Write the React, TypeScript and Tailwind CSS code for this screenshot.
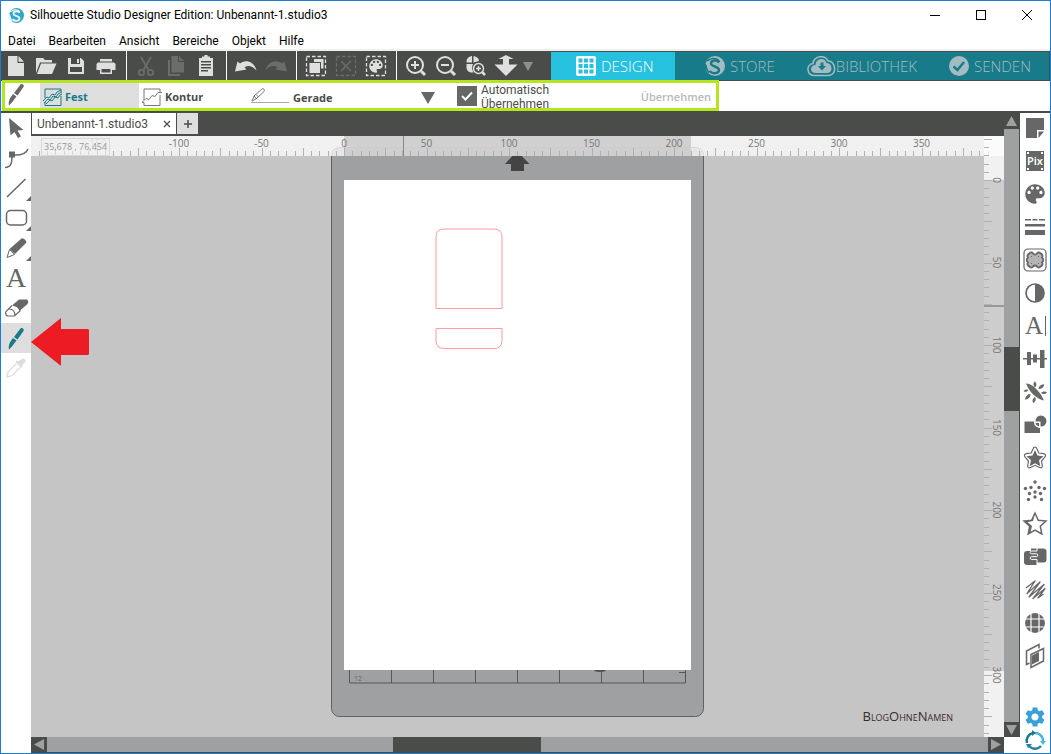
import type { ReactNode } from 'react';
import { IoMdColorPalette } from 'react-icons/io';
import { MdSettings } from 'react-icons/md';

const PX_PER_MM = 1.65;

const Icon = ({ children }: { children: ReactNode }) => (
  <svg width="30" height="30" viewBox="0 0 30 30" className="block shrink-0" fill="currentColor" aria-hidden="true">
    {children}
  </svg>
);

const SwooshLogo = ({ size, disc, line }: { size: number; disc: string; line: string }) => (
  <svg width={size} height={size} viewBox="0 0 20 20" className="shrink-0" aria-hidden="true">
    <circle cx="10" cy="10" r="10" fill={disc} />
    <path d="M0 4.500C3 6 4 2.500 8 2.500c4 0 6 1.500 6.500 3.500" fill="none" stroke={line} strokeWidth="1.500" />
    <path d="M14 6.500C12 3.500 6 4 6 7.500c0 3.500 8 2.500 8 6.500 0 3.500-6 4.500-9.500 1" fill="none" stroke={line} strokeWidth="2.400" />
    <path d="M0 7v6l4 4.500c1-2-1-3-1.500-5S1.500 8 0 7z" fill={line} />
  </svg>
);

const KnifeShape = () => (
  <>
    <path d="M19.500 5.500c1.500-1.300 4.200.6 3 2.500l-6 8.500-3.500-2.500z" />
    <path d="M12 15l3.500 2.500-2 2.500c-1.500 2.500-3.500 4.500-5.500 6.500-.8-2 0-5.500 1.500-8z" />
  </>
);

const dashedBox = <rect x="5.500" y="5.500" width="19" height="19" fill="none" stroke="currentColor" strokeWidth="1.300" strokeDasharray="3.500 2" />;

const fileTools = [
  { label: 'Neu', disabled: false, icon: <><path d="M7 5h9.500v7H23v13H7z" /><path d="M17.500 5L23 10.800h-5.500z" /></> },
  {
    label: 'Öffnen',
    disabled: false,
    icon: <><path d="M5 22V7h7l2 2h7v2.500H9z" /><path d="M10 12.500h15.500L21 23H6z" /></>,
  },
  {
    label: 'Speichern',
    disabled: false,
    icon: <path fillRule="evenodd" d="M7 7h13l3 3v13H7zM10 7v6h9V7zM9 16v5h12v-5zM16 8h2v4h-2z" />,
  },
  {
    label: 'Drucken',
    disabled: false,
    icon: <><path d="M9 8h12v2.500H9z" /><path fillRule="evenodd" d="M7 11.500h16l1.500 1.500v6h-3.500v4H9v-4H5.500v-6zM10.500 18v3.500h9V18z" /></>,
  },
];

const clipboardTools = [
  {
    label: 'Ausschneiden',
    disabled: true,
    icon: (
      <g fill="none" stroke="currentColor" strokeWidth="1.800">
        <path d="M10 6l7.500 13M20 6l-7.500 13" />
        <circle cx="10.500" cy="21.500" r="2.700" />
        <circle cx="19.500" cy="21.500" r="2.700" />
      </g>
    ),
  },
  {
    label: 'Kopieren',
    disabled: true,
    icon: <><path d="M7 9h2v14h10v2H7z" /><path d="M10.500 5h6.500v6h6v10.500H10.500z" /><path d="M18 5l5 5h-5z" /></>,
  },
  {
    label: 'Einfügen',
    disabled: false,
    icon: <path fillRule="evenodd" d="M8 7h3V5.500h2.500V4h3v1.500H19V7h3v18H8zM10 10v1.500h10V10zM10 13v1.500h10V13zM10 16v1.500h10V16zM10 19v1.500h7V19z" />,
  },
];

const historyTools = [
  { label: 'Rückgängig', disabled: false, icon: <path d="M4 20.500l2.500-10 2.500 2c6-4.500 14-2 16.500 7-4-4.500-8-5.500-12-3.200l2 2.200z" /> },
  { label: 'Wiederholen', disabled: true, icon: <path d="M26 20.500l-2.500-10-2.500 2c-6-4.500-14-2-16.500 7 4-4.500 8-5.500 12-3.200l-2 2.200z" /> },
];

const selectionTools = [
  { label: 'Alles auswählen', disabled: false, icon: <>{dashedBox}<path d="M13 8h9.500v9.500H20V11h-7z" /><path d="M8.500 12h10.500v10H8.500z" /></> },
  { label: 'Auswahl aufheben', disabled: true, icon: <>{dashedBox}<path d="M10 10l10 10M20 10L10 20" stroke="currentColor" strokeWidth="1.500" /></> },
  { label: 'Nach Farbe auswählen', disabled: false, icon: <>{dashedBox}<IoMdColorPalette x="6" y="6" size={18} /></> },
];

const zoomTools = [
  {
    label: 'Vergrößern',
    disabled: false,
    icon: (
      <g fill="none" stroke="currentColor" strokeWidth="2">
        <circle cx="14" cy="14" r="8" />
        <path d="M10 14h8M14 10v8" />
        <path d="M20 20l4 4" strokeWidth="3" />
      </g>
    ),
  },
  {
    label: 'Verkleinern',
    disabled: false,
    icon: (
      <g fill="none" stroke="currentColor" strokeWidth="2">
        <circle cx="14" cy="14" r="8" />
        <path d="M10 14h8" />
        <path d="M20 20l4 4" strokeWidth="3" />
      </g>
    ),
  },
  {
    label: 'Auswahl zoomen',
    disabled: false,
    icon: (
      <>
        <path d="M5.500 11.500c0-4 2-6 5.500-6.500v6.500zM12.500 5c3.500.5 5.500 2.500 5.500 5l-5.500 1.500zM5.500 13h6.500c-1.500 3-1 6 .5 8.500-4 .5-7-1.500-7-5z" />
        <g fill="none" stroke="currentColor" strokeWidth="1.500">
          <circle cx="17.500" cy="17.500" r="5" />
          <path d="M15 17.500h5M17.500 15v5" />
          <path d="M21 21l3 3" strokeWidth="2.500" />
        </g>
      </>
    ),
  },
  { label: 'Verschieben', disabled: false, icon: <path d="M15 4l7.500 4H18v5.500h8.500L15 25 3.500 13.500H12V8H7.500z" /> },
];

const drawTools = [
  { label: 'Auswählen', icon: <path d="M8 5l14.500 12-6 .5 3.500 6-3 1.500-3.500-6-4 3.500z" /> },
  {
    label: 'Punktbearbeitung',
    icon: <><path d="M4 24.500c6 0 7-4 7-12.500 7 .5 14-.5 16-6" fill="none" stroke="currentColor" strokeWidth="1.500" /><path d="M8 8.500h6v6H8z" /></>,
  },
  { label: 'Linie', flyout: true, icon: <path d="M6 24L24.500 6" stroke="currentColor" strokeWidth="1.500" /> },
  { label: 'Rechteck', flyout: true, icon: <rect x="5.500" y="7.500" width="20" height="14.500" rx="4" fill="none" stroke="currentColor" strokeWidth="1.500" /> },
  {
    label: 'Freihand',
    flyout: true,
    icon: <><path d="M20.500 5.500c1.500-1 6 3 4.500 4.500L14 21l-5.500-5z" /><path d="M8.500 16.500l5 5-7.500 3z" fill="none" stroke="currentColor" /></>,
  },
  { label: 'Text', icon: <text x="15" y="24" textAnchor="middle" fontSize="28" fontFamily="Liberation Serif, serif">A</text> },
  {
    label: 'Radierer',
    icon: (
      <>
        <path d="M11 12.500l7-6h8c1.500 1 1.500 3 .5 4.500l-8 7c-1-3-3.500-5-7.500-5.500z" />
        <path d="M11 12.500l-6 6c-1 2 0 4.500 2 4.500h6.500l6-5.500M8 16c4 0 6 2.500 6 7" fill="none" stroke="currentColor" strokeWidth="1.200" />
      </>
    ),
  },
  { label: 'Messer', active: true, icon: <KnifeShape /> },
  {
    label: 'Pipette',
    disabled: true,
    icon: (
      <>
        <path d="M20 6.500c2-2.500 6 .5 4 3l-3 3 .8 1-1.500 1.500-6-6L16 7.500l1.500 1z" />
        <path d="M15 11l-8 8-1 5 5-1.500 8-8" fill="none" stroke="currentColor" strokeWidth="1.300" />
      </>
    ),
  },
];

const star = 'M15 4l3.300 7.200 7.700.9-5.700 5.200 1.500 7.700-6.800-3.800-6.800 3.800 1.500-7.700L4 12.100l7.700-.9z';

const panels = [
  { label: 'Seite einrichten', icon: <><path d="M6 5h18v12h-7v8H6z" /><path d="M18.500 18.500H24L18.500 25z" /></> },
  {
    label: 'Pixscan',
    icon: (
      <>
        <path d="M6 5h18v20H6z" />
        <path d="M7 6h2v2H7zM21 6h2v2h-2zM7 22h2v2H7zM21 22h2v2h-2z" fill="#fff" />
        <text x="15" y="19" textAnchor="middle" fontSize="11" fontWeight="600" fill="#fff" fontFamily="Noto Sans, sans-serif">Pix</text>
      </>
    ),
  },
  { label: 'Füllung', icon: <IoMdColorPalette x="2" y="2" size={26} /> },
  { label: 'Linienstil', icon: <path d="M5 7h6v1.500H5zM12.500 7h5v1.500h-5zM19 7h6v1.500h-6zM5 12h20v2.500H5zM5 18h20v5H5z" /> },
  {
    label: 'Nachzeichnen',
    icon: (
      <>
        <rect x="4" y="4" width="22" height="22" rx="4" fill="none" stroke="currentColor" strokeWidth="1.200" />
        <path
          d="M9.500 8.500a2 2 0 0 1 3.500 0a2.500 2.500 0 0 0 4 0a2 2 0 0 1 3.500 0a2.500 2.500 0 0 1 1.500 4a3 3 0 0 1 0 5a2.500 2.500 0 0 1-1.500 4a2 2 0 0 1-3.500 0a2.500 2.500 0 0 0-4 0a2 2 0 0 1-3.500 0a2.500 2.500 0 0 1-1.500-4a3 3 0 0 1 0-5a2.500 2.500 0 0 1 1.500-4z"
          fill="#b4b4b4"
          stroke="currentColor"
          strokeWidth="1.800"
        />
        <path d="M11 11h1v1h-1zM18 11h1v1h-1zM11 18h1v1h-1zM18 18h1v1h-1z" />
      </>
    ),
  },
  { label: 'Bildeffekte', icon: <><circle cx="15" cy="15" r="9" fill="none" stroke="currentColor" strokeWidth="1.700" /><path d="M15 6a9 9 0 0 1 0 18z" /></> },
  {
    label: 'Textstil',
    icon: <><text x="14" y="23" textAnchor="middle" fontSize="25" fontFamily="Liberation Serif, serif">A</text><path d="M25 5h1v20h-1z" /></>,
  },
  { label: 'Ausrichten', icon: <path d="M3 14h24v1.500H3zM7 8h4v13H7zM13 10.500h4v8h-4zM20 6h4.500v18H20z" /> },
  {
    label: 'Replizieren',
    icon: <path d="M6 6.500c6 0 14 7.500 18 17C17 22 9 15 6 6.500zM15 10.500c-2-2-2-4-.5-6 2.500 1.500 2.500 4 .5 6zM18.500 12c0-3 3-5 6-4.500-1 3-3 4.500-6 4.500zM21 16c2-2 4-2 6-.5-2 2-4 2-6 .5zM10.500 17c-3 0-5 2-5.500 5.500 3.500 0 5.500-2.500 5.500-5.500zM15 20c-2.500 1.500-3 4-2 6 2.500-1 3.500-3.500 2-6zM8.500 13c-2-1-3.500-.5-5 1 1.500 1.500 3.500 1 5-1z" />,
  },
  {
    label: 'Modifizieren',
    icon: <><path d="M4.500 11.500h9.500c0 4 2 6 6 6.500V23H4.500z" /><path d="M15.500 11.500a5.500 5.500 0 1 1 5 5v-5z" /><path d="M15.500 13h3.500v3.200c-2-.3-3.200-1.200-3.500-3.200z" /></>,
  },
  {
    label: 'Offset',
    icon: (
      <>
        <path d="M15 7l2.500 5.600 6 .7-4.500 4 1.300 6-5.300-3-5.300 3 1.300-6-4.500-4 6-.7z" />
        <path d="M15 4c1.200 0 1.600 1 2 2l1.800 4 4.800.7c2 .5 2.700 2 1.200 3.500L21.500 18l.8 4.500c.2 2-1 3-2.800 2L15 22.300l-4.500 2.200c-1.800 1-3 0-2.800-2l.8-4.500-3.300-3.800c-1.500-1.500-.8-3 1.200-3.500l4.800-.7L13 6c.4-1 .8-2 2-2z" fill="none" stroke="currentColor" strokeWidth="1.200" />
      </>
    ),
  },
  {
    label: 'Strass',
    icon: (
      <>
        {[[15, 6], [5.500, 12.500], [11, 11.500], [19, 11.500], [24.500, 12.500], [9.500, 17.500], [15, 16], [20.500, 17.500], [8.500, 23.500], [15, 21], [21.500, 23.500]].map(([cx, cy]) => (
          <circle key={`${cx}-${cy}`} cx={cx} cy={cy} r="1.700" />
        ))}
      </>
    ),
  },
  { label: 'Skizze', icon: <><path d={star} fill="none" stroke="currentColor" strokeWidth="1.500" /><path d="M15 4l-3.500 7L4 12.300l5.500 5L8 25l2.500-1.500L12 17l-4.500-4 5.500-1z" /></> },
  {
    label: 'Puzzle',
    icon: (
      <>
        <path d="M11 6.500h12c2.500 0 3.500 1 3.500 3v8c0 2-1 3-3 3H11z" />
        <path d="M4 12c0-2 1-3 3-3h10v14H7c-2 0-3-1-3-3z" />
        <path d="M17 6v3h-5.500c-1.800 0-1.800 2.800 0 2.800h5c1.800 0 1.800 2.800 0 2.800h-5c-1.800 0-1.800 2.800 0 2.800h5.500V23" fill="none" stroke="#fff" />
      </>
    ),
  },
  {
    label: 'Schraffur',
    icon: <path d="M6 13L15 6 7 18.500 20 7 9 22 24 9.500 13 23.500 25 13.500 18 23l5.500-4" fill="none" stroke="currentColor" strokeWidth="1.300" strokeLinejoin="round" />,
  },
  {
    label: 'Kugel',
    icon: (
      <>
        <circle cx="15" cy="15" r="10" />
        <path d="M11 4v22M19 4v22M4 11h22M4 19h22" stroke="#fff" strokeWidth="1.200" />
      </>
    ),
  },
  {
    label: '3D',
    icon: (
      <>
        <path d="M9.500 22L6.500 23.500V10L19 3.500v4" fill="none" stroke="currentColor" strokeWidth="1.500" />
        <path d="M11 13.500L23.500 7.500v12.500L11 26.500z" fill="none" stroke="currentColor" strokeWidth="1.500" />
        <path d="M12 14.500l7-3.500v9l-7 3.500z" />
      </>
    ),
  },
];

const menus = ['Datei', 'Bearbeiten', 'Ansicht', 'Bereiche', 'Objekt', 'Hilfe'];

type Tool = { label: string; disabled: boolean; icon: ReactNode };

const ToolGroup = ({ tools }: { tools: Tool[] }) => (
  <div className="flex shrink-0">
    {tools.map((tool) => (
      <button key={tool.label} aria-label={tool.label} disabled={tool.disabled} className="text-[#dfdfdf] disabled:text-[#6b6d6b]">
        <Icon>{tool.icon}</Icon>
      </button>
    ))}
  </div>
);

const Separator = () => <div className="ml-[5px] mr-1 w-px shrink-0 bg-white" />;

const TitleBar = () => (
  <header className="flex h-7 shrink-0 items-center pl-2 font-['Roboto',sans-serif]">
    <SwooshLogo size={15} disc="#35a5c5" line="#e8f6fa" />
    <h1 className="ml-[6px] flex-1 text-[12px]">Silhouette Studio Designer Edition: Unbenannt-1.studio3</h1>
    <div className="flex">
      <button aria-label="Minimieren" className="w-[46px]">
        <svg width="10" height="10" className="mx-auto"><path d="M0 5.500h10" stroke="#000" /></svg>
      </button>
      <button aria-label="Maximieren" className="w-[46px]">
        <svg width="10" height="10" className="mx-auto"><rect x=".5" y=".5" width="9" height="9" fill="none" stroke="#000" /></svg>
      </button>
      <button aria-label="Schließen" className="w-[46px]">
        <svg width="10" height="10" className="mx-auto"><path d="M0 0l10 10M10 0L0 10" stroke="#000" /></svg>
      </button>
    </div>
  </header>
);

const MainToolbar = () => (
  <div className="flex h-[30px] shrink-0 bg-[#4a4c4a]">
    <ToolGroup tools={fileTools} />
    <Separator />
    <ToolGroup tools={clipboardTools} />
    <Separator />
    <ToolGroup tools={historyTools} />
    <Separator />
    <ToolGroup tools={selectionTools} />
    <Separator />
    <ToolGroup tools={zoomTools} />
    <button aria-label="Weitere Optionen" className="w-[14px] shrink-0 text-[#8e908e]">
      <svg width="10" height="9" className="mx-auto" fill="currentColor"><path d="M0 0h10L5 9z" /></svg>
    </button>
    <nav className="ml-auto flex w-[499px] py-px pr-px text-[15px] font-light text-[#a3bcc1]">
      <a href="#design" className="flex w-[124px] items-center gap-1 bg-[#26c1df] pl-6 text-white">
        <svg width="22" height="22" viewBox="0 0 22 22" aria-hidden="true">
          <rect x="1" y="1" width="20" height="20" rx="2" fill="#fff" />
          <path d="M3.500 3.500h4v4h-4zM9 3.500h4v4H9zM14.500 3.500h4v4h-4zM3.500 9h4v4h-4zM9 9h4v4H9zM14.500 9h4v4h-4zM3.500 14.500h4v4h-4zM9 14.500h4v4H9zM14.500 14.500h4v4h-4z" fill="#26c1df" />
        </svg>
        DESIGN
      </a>
      <div className="flex flex-1 items-center justify-between bg-[#177b8a] pl-[30px] pr-[18px]">
        <a href="#store" className="flex items-center gap-[5px]">
          <SwooshLogo size={20} disc="#a3bcc1" line="#177b8a" />
          STORE
        </a>
        <a href="#bibliothek" className="flex items-center">
          <svg width="29" height="22" viewBox="0 0 29 22" aria-hidden="true">
            <path d="M8 20.500c-9 0-9-11-2-12C7 1 18-1 21 6c7-1 10 13.500 1 14.500z" fill="none" stroke="#a3bcc1" strokeWidth="1.500" />
            <path d="M9 18c-7 0-6-8-.5-8C9 3 18 2 19.500 8c6-.5 7 10 1 10z" fill="#a3bcc1" />
            <path d="M13.500 7.500h3V11H19l-4 4.500L11 11h2.500z" fill="#177b8a" />
          </svg>
          BIBLIOTHEK
        </a>
        <a href="#senden" className="flex items-center gap-[5px]">
          <svg width="20" height="20" viewBox="0 0 20 20" aria-hidden="true">
            <circle cx="10" cy="10" r="10" fill="#a3bcc1" />
            <path d="M4.500 10.500l4 3.500L15 6" fill="none" stroke="#177b8a" strokeWidth="2.500" />
          </svg>
          SENDEN
        </a>
      </div>
    </nav>
  </div>
);

const KnifeOptions = () => (
  <div className="flex h-[30px] shrink-0">
    <form className="-mt-px ml-px flex h-[31px] w-[717px] items-stretch border-[3px] border-[#b5e61d] bg-white text-[11px] font-bold text-[#4a4c4a]">
      <div className="flex w-[35px] items-center overflow-hidden text-[#666866]">
        <svg width="24" height="25" viewBox="4 4 24 25" fill="currentColor" aria-hidden="true"><KnifeShape /></svg>
      </div>
      <button type="button" className="flex w-[99px] items-center gap-[2px] bg-[#dedede] pl-[3px] pt-[3px] text-[#177b8a]">
        <svg width="20" height="20" viewBox="0 0 20 20" fill="none" stroke="currentColor" aria-hidden="true">
          <path d="M2 11V2h16v3M18 9v9.500H2V15" />
          <path d="M0 14l4-4 2 1 3-4 3 1 2-3 4-2M1 16l4-4 2 1 3-4 3 1 2-3 4-2M3 17l4-4 2 1 3-4 3 1 2-3 2-1" />
        </svg>
        Fest
      </button>
      <button type="button" className="flex w-[110px] items-center gap-[3px] pl-[3px] pt-[3px]">
        <svg width="20" height="20" viewBox="0 0 20 20" fill="none" stroke="#777" aria-hidden="true">
          <path d="M2 13V2h16v3M18 8v10.500H2V15.500H0l4-4 3 1 3-4 3 1 3-4h4" />
        </svg>
        Kontur
      </button>
      <label htmlFor="line-type" aria-label="Linientyp" className="flex items-center pl-px">
        <svg width="40" height="18" viewBox="0 0 40 18" fill="none" stroke="#777" aria-hidden="true">
          <path d="M1 15.500h38" stroke="#aaa" />
          <path d="M2 14l2-5 8-7c2-1 3 1 2 2.500L6 12zM4 9l2.500 3M6 7.500l2.500 2.500" />
        </svg>
      </label>
      <div className="relative w-[145px]">
        <select id="line-type" aria-label="Linientyp" className="h-full w-full appearance-none pl-[3px] pt-[6px]">
          <option>Gerade</option>
        </select>
        <svg width="14" height="12" className="pointer-events-none absolute right-0 top-[9px]" fill="#666866"><path d="M0 0h14L7 12z" /></svg>
      </div>
      <label className="ml-[22px] flex items-center gap-1 font-['Roboto',sans-serif] text-[12px] font-normal leading-[14px]">
        <span className="grid">
          <input type="checkbox" defaultChecked className="col-start-1 row-start-1 size-5 appearance-none bg-[#666866]" />
          <svg width="20" height="20" className="pointer-events-none col-start-1 row-start-1" fill="none"><path d="M5 10l3.500 3.500L15 6.500" stroke="#fff" strokeWidth="2" /></svg>
        </span>
        <span className="pt-[3px]">Automatisch<br />Übernehmen</span>
      </label>
      <button type="button" disabled className="ml-auto pr-[5px] pt-[3px] font-semibold text-[#b9b9b9]">Übernehmen</button>
    </form>
  </div>
);

const DrawToolbox = () => (
  <aside className="w-[30px] shrink-0 bg-white">
    {drawTools.map((tool) => (
      <button
        key={tool.label}
        aria-label={tool.label}
        disabled={tool.disabled}
        className={`block size-[30px] disabled:text-[#dcdcdc] ${tool.active ? 'bg-[#dedede] text-[#177b8a]' : 'text-[#666866]'}`}
      >
        <Icon>
          {tool.icon}
          {tool.flyout && <path d="M30 23v5h-5z" />}
        </Icon>
      </button>
    ))}
  </aside>
);

const PanelBar = () => (
  <aside className="flex w-[30px] shrink-0 flex-col justify-between bg-white text-[#666866]">
    <div className="flex flex-col gap-[3px]">
      {panels.map((panel) => (
        <button key={panel.label} aria-label={panel.label} className="size-[30px]">
          <Icon>{panel.icon}</Icon>
        </button>
      ))}
    </div>
    <div className="flex flex-col items-center">
      <button aria-label="Einstellungen"><MdSettings size={24} color="#3a9fd6" /></button>
      <button aria-label="Synchronisieren">
        <svg width="24" height="24" viewBox="0 0 24 24" fill="none" strokeWidth="2.500" aria-hidden="true">
          <path d="M4 14a8 8 0 0 1 6-10" stroke="#177b8a" />
          <path d="M12 4a8 8 0 0 1 8 9" stroke="#49b9d6" />
          <path d="M18 17a8 8 0 0 1-12 0" stroke="#2a7fa5" />
          <path d="M9 1l4 3-4 3z" fill="#177b8a" />
          <path d="M17 12h6l-3 4z" fill="#49b9d6" />
          <path d="M3 15l6 0-4 4z" fill="#2a7fa5" />
        </svg>
      </button>
    </div>
  </aside>
);

const ticks = (from: number, to: number) => Array.from({ length: (to - from) / 5 + 1 }, (_, i) => from + i * 5);

const TopRuler = () => (
  <svg className="absolute left-0 top-0 h-5 w-full" fontSize="10" fill="#777">
    <rect width="100%" height="20" fill="#fff" opacity=".74" />
    <rect x="313" width="347" height="20" fill="#cacaca" opacity=".85" />
    <g transform="translate(313 0)">
      {ticks(-185, 390).map((mm) => (
        <path key={mm} d={`M${Math.round(mm * PX_PER_MM) + 0.5} ${mm % 25 === 0 ? 12 : 15}V20`} stroke="#b0b0b0" />
      ))}
      {ticks(-150, 350).filter((mm) => mm % 50 === 0).map((mm) => (
        <text key={mm} x={mm * PX_PER_MM} y="11" textAnchor="middle" fillOpacity={mm === -150 ? 0.4 : 1}>{mm}</text>
      ))}
    </g>
    <path d="M372.500 0v20" stroke="#888" />
  </svg>
);

const SideRuler = () => (
  <svg className="absolute right-0 top-0 h-full w-5" fontSize="10" fill="#777">
    <rect width="20" height="100%" fill="#fff" opacity=".75" />
    <rect y="44" width="20" height="491" fill="#cdcdcd" />
    <g transform="translate(0 44)">
      {ticks(-25, 335).map((mm) => (
        <path key={mm} d={`M0 ${Math.round(mm * PX_PER_MM) + 0.5}H${mm % 25 === 0 ? 8 : 5}`} stroke="#b0b0b0" />
      ))}
      {ticks(0, 300).filter((mm) => mm % 50 === 0).map((mm) => (
        <text key={mm} transform={`translate(9 ${mm * PX_PER_MM}) rotate(90)`} textAnchor="middle">{mm}</text>
      ))}
    </g>
    <path d="M0 170h20" stroke="#999" strokeWidth="2" />
  </svg>
);

const Canvas = () => (
  <div className="relative flex-1 overflow-hidden bg-[#c5c5c5]">
    <svg className="absolute inset-0 h-full w-full" fill="none">
      <rect x="300.500" y="11.500" width="372" height="569" rx="8" fill="#9fa0a2" stroke="#5f6163" />
      <path d="M318.500 534v13h336v-13M360.500 534v13M402.500 534v13M444.500 534v13M486.500 534v13M528.500 534v13M570.500 534v13M612.500 534v13M648 536.500h6" stroke="#55575a" />
      <text x="323" y="545" fontSize="7" fill="#66686a">12</text>
      <ellipse cx="569" cy="534" rx="6" ry="2" fill="#55575a" />
      <rect x="313" y="44" width="347" height="490" fill="#fff" />
      <g stroke="#ff9c9c">
        <path d="M405 172.500V101q0-8 8-8h50q8 0 8 8v71.500z" />
        <path d="M405 192.500v12q0 8 8 8h50q8 0 8-8v-12z" />
      </g>
      <path d="M486 15l12.500 13H493v7h-13v-7h-6z" fill="#444" />
    </svg>
    <TopRuler />
    <SideRuler />
    <output className="absolute left-[10px] top-[2px] border border-[#d8d8d8] bg-[#f2f2f2]/60 px-[2px] text-[9px] leading-[16px] text-[#999]">
      35,678 , 76,454
    </output>
    <svg width="58" height="48" className="absolute left-0 top-[182px]" fill="#ed1c24" aria-hidden="true">
      <path d="M0 24L30 0v11h27l1 1v24l-1 1H30v11z" />
    </svg>
    <p className="absolute bottom-[10px] right-[51px] text-[13px] leading-[22px] text-[#3a2c30] [font-variant:small-caps]">
      BlogOhneNamen
    </p>
  </div>
);

const VerticalScroll = () => (
  <div className="mb-4 flex w-4 shrink-0 flex-col border-r border-[#4a4c4a] bg-[#9fa0a2]">
    <button aria-label="Nach oben" className="flex h-4 shrink-0 items-center justify-center bg-[#4a4c4a]">
      <svg width="11" height="10" fill="#9fa0a2"><path d="M5.500 0L11 10H0z" /></svg>
    </button>
    <div className="flex-1 pt-[218px]">
      <div className="h-16 bg-[#4a4c4a]" />
    </div>
    <button aria-label="Nach unten" className="flex h-[15px] shrink-0 items-center justify-center bg-[#4a4c4a]">
      <svg width="11" height="10" fill="#9fa0a2"><path d="M0 0h11L5.500 10z" /></svg>
    </button>
  </div>
);

const HorizontalScroll = () => (
  <div className="flex h-4 shrink-0 border-b border-[#4a4c4a] bg-[#9fa0a2]">
    <button aria-label="Nach links" className="flex w-4 shrink-0 items-center justify-center bg-[#4a4c4a]">
      <svg width="10" height="11" fill="#9fa0a2"><path d="M10 0v11L0 5.500z" /></svg>
    </button>
    <div className="flex flex-1 pl-[346px]">
      <div className="w-[148px] bg-[#4a4c4a]" />
    </div>
    <button aria-label="Nach rechts" className="flex w-4 shrink-0 items-center justify-center bg-[#4a4c4a]">
      <svg width="10" height="11" fill="#9fa0a2"><path d="M0 0v11l10-5.500z" /></svg>
    </button>
  </div>
);

const Tabs = () => (
  <div className="flex h-[23px] shrink-0 gap-px bg-[#4a4c4a] pb-[2px] pl-px text-[#4a4c4a]">
    <div className="flex w-[144px] items-center justify-between bg-white pl-[5px] pr-[5px] font-['Roboto',sans-serif] text-[12px]">
      <a href="#document">Unbenannt-1.studio3</a>
      <button aria-label="Dokument schließen">
        <svg width="8" height="8"><path d="M1 1l6 6M7 1L1 7" stroke="#4a4c4a" strokeWidth="1.200" /></svg>
      </button>
    </div>
    <button aria-label="Neues Dokument" className="w-[21px] bg-[#dedede]">
      <svg width="8" height="8" className="mx-auto"><path d="M4 0v8M0 4h8" stroke="#4a4c4a" strokeWidth="1.500" /></svg>
    </button>
  </div>
);

export default function App() {
  return (
    <div className="flex h-screen min-h-[740px] flex-col border border-[#1a7fd4] bg-white font-['Open_Sans','Noto_Sans',sans-serif] text-black">
      <TitleBar />
      <nav className="flex h-[22px] shrink-0 items-center gap-[13px] border-b-2 border-[#f0f0f0] pl-[7px] pt-1 font-['Roboto',sans-serif] text-[12px]">
        {menus.map((menu) => (
          <button key={menu}>{menu}</button>
        ))}
      </nav>
      <MainToolbar />
      <KnifeOptions />
      <div className="flex min-h-0 flex-1 border-t-2 border-[#4a4c4a]">
        <DrawToolbox />
        <main className="flex min-w-0 flex-1">
          <div className="flex min-w-0 flex-1 flex-col">
            <Tabs />
            <Canvas />
            <HorizontalScroll />
          </div>
          <VerticalScroll />
        </main>
        <PanelBar />
      </div>
    </div>
  );
}
